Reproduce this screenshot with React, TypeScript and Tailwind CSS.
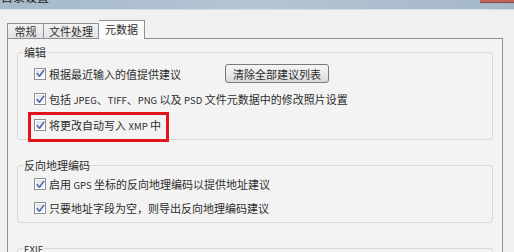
import React from "react";

function Check() {
  return (
    <div className="w-[12px] h-[12px] shrink-0 border border-[#8e8f8f] bg-white flex items-center justify-center">
      <div className="w-[8px] h-[8px] bg-gradient-to-br from-[#dfe3e8] to-[#f8f8f8] flex items-center justify-center">
        <svg width="9" height="9" viewBox="0 0 9 9" className="overflow-visible">
          <path d="M1.2 4.6 L3.4 7.2 L7.8 1.2" fill="none" stroke="#4f62ad" strokeWidth="1.5" strokeLinecap="round" strokeLinejoin="round" />
        </svg>
      </div>
    </div>
  );
}

function Row({ children, h = "h-[18px]" }: { children: React.ReactNode; h?: string }) {
  return (
    <div className={`flex items-center ${h} pl-[16px]`}>
      <Check />
      <span className="ml-[3px] whitespace-nowrap leading-[14px]">{children}</span>
    </div>
  );
}

const L = ({ t }: { t: string }) => <span className="text-[9.5px]">{t}</span>;

export default function App() {
  return (
    <div className="w-[514px] h-[252px] overflow-hidden bg-[#f0f0f0] text-[11px] text-[#2e2e2e] font-['Noto_Sans_CJK_SC','Noto_Sans',sans-serif]">
      {/* title bar */}
      <div className="h-[9px] flex overflow-hidden bg-gradient-to-r from-[#a6bacb] via-[#b4c5d3] to-[#a5b8c8]">
        <div className="ml-[1px] -mt-[10px] text-[12px] leading-[14px] text-[#202020]">目录设置</div>
        <div className="flex-1" />
        <div className="w-[34px] h-[3px] bg-[#c2625c] border-b border-[#8a4a45]" />
      </div>
      <div className="h-px bg-[#d6dde3]" />
      {/* tabs */}
      <div className="h-[28px] flex items-end pl-[7px]">
        <div className="w-[37px] h-[15px] border border-b-0 border-[#8d9098] bg-gradient-to-b from-[#f3f3f3] to-[#e2e2e2] flex items-center justify-center leading-[14px]">
          常规
        </div>
        <div className="w-[55px] h-[15px] border border-l-0 border-b-0 border-[#8d9098] bg-gradient-to-b from-[#f3f3f3] to-[#e2e2e2] flex items-center justify-center leading-[14px]">
          文件处理
        </div>
        <div className="relative z-10 -mb-px w-[46px] h-[19px] border border-l-0 border-b-0 border-[#8d9098] bg-[#fbfbfb] flex items-center justify-center leading-[14px] pb-[2px]">
          元数据
        </div>
      </div>
      {/* panel */}
      <div className="ml-[7px] w-[496px] h-[260px] border border-[#8d9098] bg-[#f3f3f3]">
        <fieldset className="mx-[9px] mt-[6px] border border-[#d9d9d9] rounded-[3px] pb-[5px]">
          <legend className="ml-[5px] px-[1px] leading-[14px]">编辑</legend>
          <div className="pt-[5px] flex flex-col">
            <div className="flex items-center h-[19px] pl-[16px]">
              <div className="w-[191px] flex items-center">
                <Check />
                <span className="ml-[3px] whitespace-nowrap leading-[14px]">根据最近输入的值提供建议</span>
              </div>
              <div className="w-[104px] h-[19px] border border-[#7a7a7a] rounded-[3px] bg-gradient-to-b from-[#f4f4f4] via-[#ebebeb] to-[#d8d8d8] flex items-center justify-center leading-[14px] whitespace-nowrap">
                清除全部建议列表
              </div>
            </div>
            <div className="mt-[7px]">
              <Row>
                包括 <L t="JPEG" />、<L t="TIFF" />、<L t="PNG" /> 以及 <L t="PSD" /> 文件元数据中的修改照片设置
              </Row>
            </div>
            <div className="mt-[8px] relative">
              <Row>
                将更改自动写入 <L t="XMP" /> 中
              </Row>
              <div className="absolute left-[10px] top-[-4px] w-[141px] h-[30px] border-[3px] border-[#e3141c]" />
            </div>
          </div>
        </fieldset>

        <fieldset className="mx-[9px] mt-[18px] border border-[#d9d9d9] rounded-[3px] pb-[5px]">
          <legend className="ml-[5px] px-[1px] leading-[14px]">反向地理编码</legend>
          <div className="pt-[3px] flex flex-col gap-[6px]">
            <Row>
              启用 <L t="GPS" /> 坐标的反向地理编码以提供地址建议
            </Row>
            <Row>只要地址字段为空，则导出反向地理编码建议</Row>
          </div>
        </fieldset>

        <fieldset className="mx-[9px] mt-[18px] border border-[#d9d9d9] rounded-[3px] pb-[5px] h-[60px]">
          <legend className="ml-[5px] px-[1px] leading-[14px]">
            <L t="EXIF" />
          </legend>
        </fieldset>
      </div>
    </div>
  );
}
